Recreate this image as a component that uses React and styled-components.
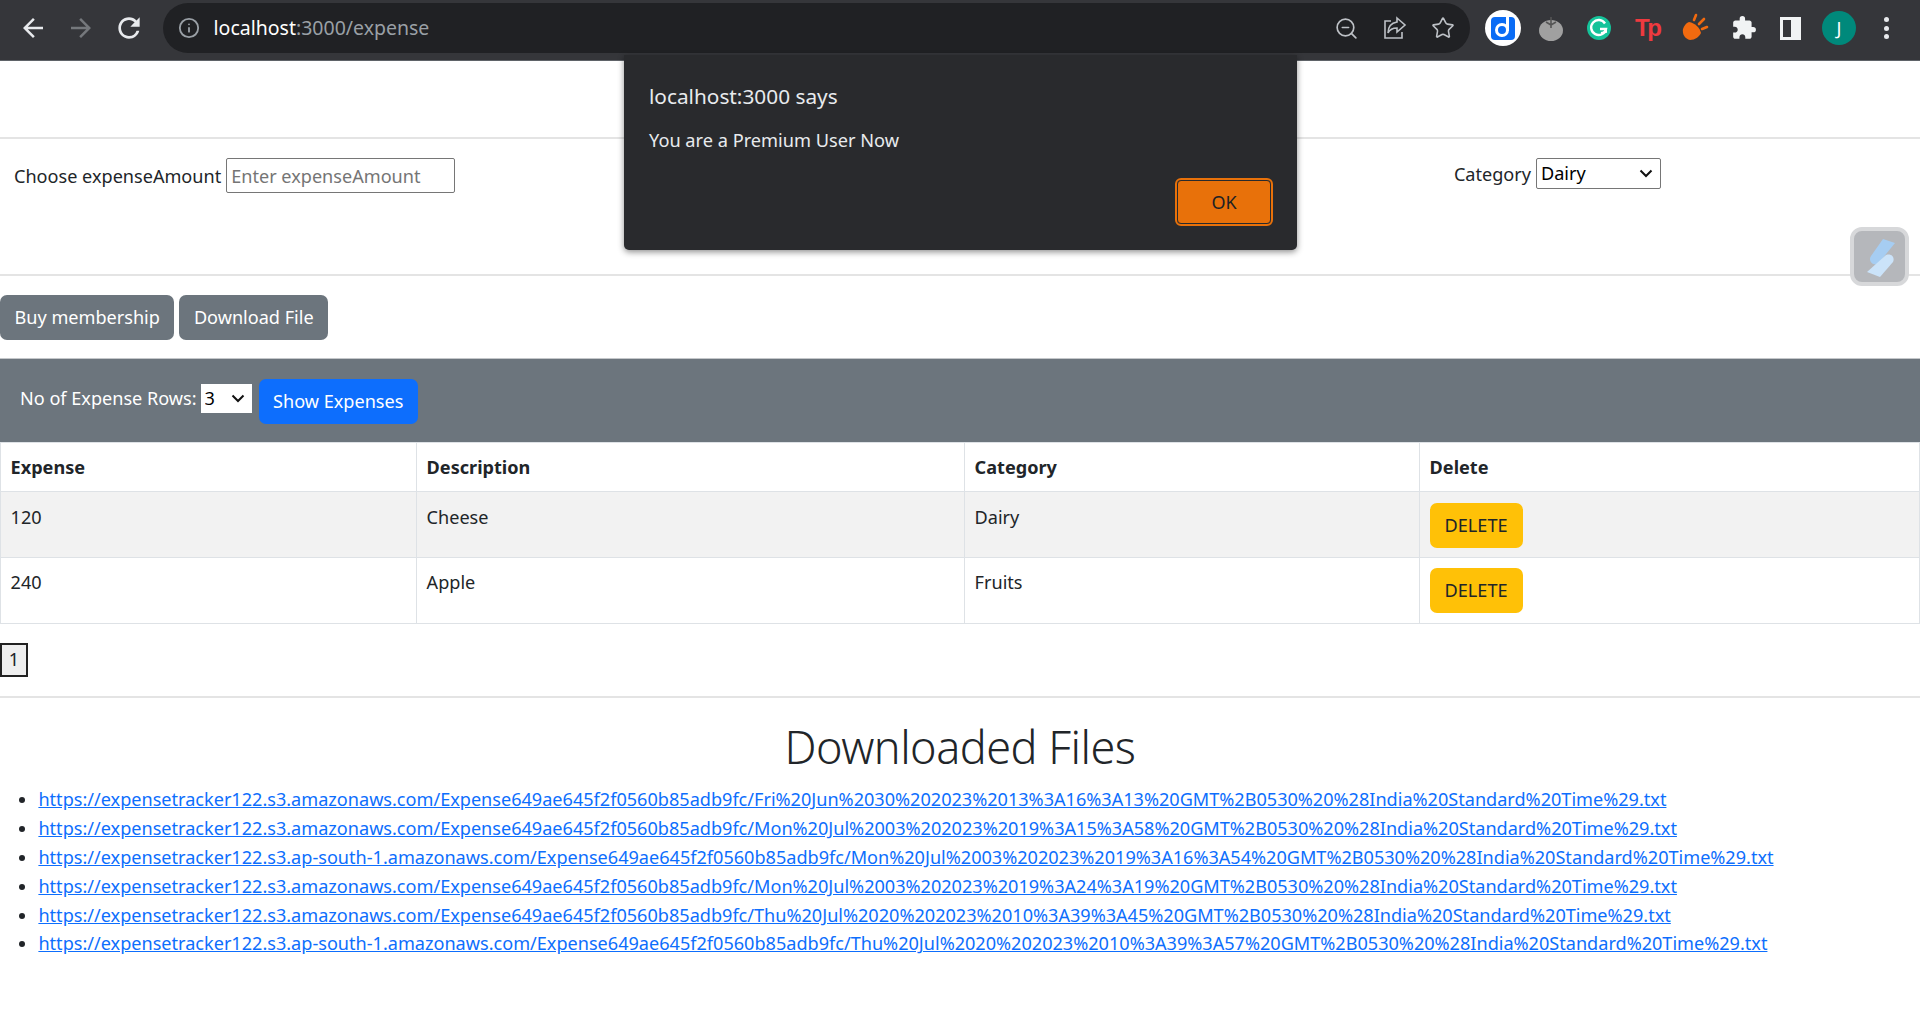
import React from "react";
import styled, { createGlobalStyle, css } from "styled-components";
import { MdArrowBack, MdArrowForward, MdRefresh, MdExtension } from "react-icons/md";
import { ZoomOut, Star, Info } from "lucide-react";

const links = [
  "https://expensetracker122.s3.amazonaws.com/Expense649ae645f2f0560b85adb9fc/Fri%20Jun%2030%202023%2013%3A16%3A13%20GMT%2B0530%20%28India%20Standard%20Time%29.txt",
  "https://expensetracker122.s3.amazonaws.com/Expense649ae645f2f0560b85adb9fc/Mon%20Jul%2003%202023%2019%3A15%3A58%20GMT%2B0530%20%28India%20Standard%20Time%29.txt",
  "https://expensetracker122.s3.ap-south-1.amazonaws.com/Expense649ae645f2f0560b85adb9fc/Mon%20Jul%2003%202023%2019%3A16%3A54%20GMT%2B0530%20%28India%20Standard%20Time%29.txt",
  "https://expensetracker122.s3.amazonaws.com/Expense649ae645f2f0560b85adb9fc/Mon%20Jul%2003%202023%2019%3A24%3A19%20GMT%2B0530%20%28India%20Standard%20Time%29.txt",
  "https://expensetracker122.s3.amazonaws.com/Expense649ae645f2f0560b85adb9fc/Thu%20Jul%2020%202023%2010%3A39%3A45%20GMT%2B0530%20%28India%20Standard%20Time%29.txt",
  "https://expensetracker122.s3.ap-south-1.amazonaws.com/Expense649ae645f2f0560b85adb9fc/Thu%20Jul%2020%202023%2010%3A39%3A57%20GMT%2B0530%20%28India%20Standard%20Time%29.txt",
];

const expenses = [
  { amount: 120, description: "Cheese", category: "Dairy" },
  { amount: 240, description: "Apple", category: "Fruits" },
];

const App = () => {
  return (
    <>
      <GlobalStyle />
      <Toolbar>
        <NavIcons>
          <ToolIcon><MdArrowBack size={30} /></ToolIcon>
          <ToolIcon $dim><MdArrowForward size={30} /></ToolIcon>
          <ToolIcon><MdRefresh size={32} /></ToolIcon>
        </NavIcons>
        <Omnibox>
          <Info size={22} color="#9aa0a6" />
          <Url>
            <b>localhost</b>:3000/expense
          </Url>
          <OmniIcons>
            <ZoomOut size={25} strokeWidth={1.6} />
            <svg width="26" height="26" viewBox="0 0 26 26" fill="none" stroke="currentColor" strokeWidth="1.6">
              <path d="M9 6H3v17h17v-6" />
              <path d="M15 3l8 7-8 7v-4c-4 0-7 1-9 5 0-6 3-10 9-11z" />
            </svg>
            <Star size={24} strokeWidth={1.6} />
          </OmniIcons>
        </Omnibox>
        <Extensions>
          <ToolIcon>
            <svg width="36" height="36" viewBox="0 0 36 36">
              <circle cx="18" cy="18" r="18" fill="#fff" />
              <rect x="6" y="7" width="24" height="23" rx="4" fill="#0a6cf5" />
              <circle cx="17" cy="20" r="5.5" fill="none" stroke="#fff" strokeWidth="3" />
              <path d="M22.5 7v14" stroke="#fff" strokeWidth="3" />
            </svg>
          </ToolIcon>
          <ToolIcon>
            <svg width="28" height="28" viewBox="0 0 28 28">
              <ellipse cx="14" cy="16.5" rx="12" ry="10.5" fill="#a0a0a0" />
              <path d="M14 3v11M9 8l5 3 5-3" stroke="#555" strokeWidth="1.6" fill="none" />
            </svg>
          </ToolIcon>
          <ToolIcon>
            <svg width="26" height="26" viewBox="0 0 26 26">
              <circle cx="13" cy="13" r="12" fill="#15c39a" />
              <path d="M19 8.5A7.5 7.5 0 1 0 20 14h-6" fill="none" stroke="#fff" strokeWidth="2.4" />
              <path d="M15 18l5-1v-4" fill="none" stroke="#fff" strokeWidth="2" />
            </svg>
          </ToolIcon>
          <ToolIcon>
            <TpLogo>Tp</TpLogo>
          </ToolIcon>
          <ToolIcon>
            <svg width="28" height="30" viewBox="0 0 28 30">
              <path d="M8 9c6 1 11 6 12 11-2 4-6 7-11 7-5-1-8-6-7-11 1-3 3-6 6-7z" fill="#f26a0f" />
              <path d="M13 7l2-5M18 11l5-5M21 16l5-2" stroke="#f26a0f" strokeWidth="2.6" strokeLinecap="round" />
            </svg>
          </ToolIcon>
          <ToolIcon><MdExtension size={26} color="#f1f3f4" /></ToolIcon>
          <ToolIcon>
            <SidePanel />
          </ToolIcon>
          <ToolIcon><Avatar>J</Avatar></ToolIcon>
          <ToolIcon>
            <Dots><i /><i /><i /></Dots>
          </ToolIcon>
        </Extensions>
      </Toolbar>

      <HeaderSpace />

      <FormRow>
        <Field>
          <FieldLabel>Choose expenseAmount</FieldLabel>
          <AmountInput placeholder="Enter expenseAmount" />
        </Field>
        <Field>
          <FieldLabel>Category</FieldLabel>
          <CategorySelect defaultValue="Dairy">
            <option>Dairy</option>
            <option>Fruits</option>
          </CategorySelect>
        </Field>
      </FormRow>

      <ButtonRow>
        <GreyButton>Buy membership</GreyButton>
        <GreyButton>Download File</GreyButton>
      </ButtonRow>

      <RowsBar>
        <RowsLabel>No of Expense Rows:</RowsLabel>
        <RowsSelect defaultValue="3">
          <option>3</option>
          <option>5</option>
          <option>10</option>
        </RowsSelect>
        <ShowButton>Show Expenses</ShowButton>
      </RowsBar>

      <ExpenseTable>
        <colgroup>
          <col width="416" />
          <col width="548" />
          <col width="455" />
          <col />
        </colgroup>
        <thead>
          <tr>
            <th>Expense</th>
            <th>Description</th>
            <th>Category</th>
            <th>Delete</th>
          </tr>
        </thead>
        <tbody>
          {expenses.map((e) => (
            <tr key={e.amount}>
              <td>{e.amount}</td>
              <td>{e.description}</td>
              <td>{e.category}</td>
              <td><DeleteButton>DELETE</DeleteButton></td>
            </tr>
          ))}
        </tbody>
      </ExpenseTable>

      <Pager>
        <PageButton>1</PageButton>
      </Pager>

      <Heading>Downloaded Files</Heading>
      <LinkList>
        {links.map((l) => (
          <li key={l}><a href="#top">{l}</a></li>
        ))}
      </LinkList>

      <Dialog>
        <DialogTitle>localhost:3000 says</DialogTitle>
        <DialogText>You are a Premium User Now</DialogText>
        <DialogActions>
          <OkButton>OK</OkButton>
        </DialogActions>
      </Dialog>

      <FloatWidget>
        <svg width="36" height="42" viewBox="0 0 36 42">
          <path d="M21 3l12 4-17 21c-6 2-10-4-7-8z" fill="#a6cdf2" />
          <path d="M24 19c6-2 9 3 7 7L18 41 5 36z" fill="#cbe3f9" />
        </svg>
      </FloatWidget>
    </>
  );
};

export default App;

const GlobalStyle = createGlobalStyle`
  body {
    margin: 0;
    background: #fff;
    color: #212529;
    font-family: "Noto Sans", "Open Sans", sans-serif;
    font-size: 18.1px;
    line-height: 28.8px;
  }
`;

const chevron = css`
  appearance: none;
  background: #fff url("data:image/svg+xml,%3Csvg xmlns='http://www.w3.org/2000/svg' width='14' height='9' viewBox='0 0 14 9'%3E%3Cpath d='M1.5 1.5L7 7l5.5-5.5' fill='none' stroke='%23111' stroke-width='2'/%3E%3C/svg%3E") no-repeat right 7px center;
`;

const Toolbar = styled.div`
  height: 57px;
  padding-top: 3px;
  display: flex;
  align-items: flex-start;
  background: #35363a;
  border-bottom: 1px solid #5f6368;
`;

const NavIcons = styled.div`
  display: flex;
  padding-left: 8.5px;
  margin-right: 9.5px;
`;

const ToolIcon = styled.div`
  width: 48.2px;
  height: 50px;
  display: flex;
  align-items: center;
  justify-content: center;
  color: ${(p) => (p.$dim ? "#75787c" : "#e8eaed")};
`;

const Omnibox = styled.div`
  width: 1307px;
  height: 50px;
  border-radius: 25px;
  background: #202124;
  display: flex;
  align-items: center;
  padding-left: 15px;
  box-sizing: border-box;
`;

const Url = styled.div`
  margin-left: 14px;
  color: #9aa0a6;
  font-size: 19.5px;
  b {
    font-weight: 400;
    color: #fff;
  }
`;

const OmniIcons = styled.div`
  margin-left: auto;
  margin-right: 15px;
  display: flex;
  align-items: center;
  gap: 23px;
  color: #bdc1c6;
`;

const Extensions = styled.div`
  display: flex;
  margin-left: 9px;
`;

const TpLogo = styled.span`
  font-family: "Liberation Sans", sans-serif;
  font-weight: 700;
  font-size: 24px;
  letter-spacing: -2.5px;
  color: #ef3a3f;
`;

const SidePanel = styled.div`
  width: 21px;
  height: 23px;
  margin-left: -2px;
  box-sizing: border-box;
  background: #f1f3f4;
  border: 3px solid #f1f3f4;
  border-right-width: 10px;
  box-shadow: inset 0 0 0 20px #35363a;
`;

const Avatar = styled.div`
  width: 34px;
  height: 34px;
  margin-left: -2px;
  border-radius: 50%;
  background: #00897b;
  color: #fff;
  font-size: 18px;
  line-height: 34px;
  text-align: center;
`;

const Dots = styled.div`
  display: flex;
  flex-direction: column;
  gap: 3.5px;
  margin-left: -4px;
  i {
    width: 5px;
    height: 5px;
    border-radius: 50%;
    background: #e8eaed;
  }
`;

const HeaderSpace = styled.div`
  height: 76px;
  border-bottom: 2px solid #e4e4e4;
`;

const FormRow = styled.div`
  height: 116px;
  border-bottom: 2px solid #e4e4e4;
  display: flex;
  justify-content: space-between;
  align-items: flex-start;
  padding: 19px 259px 0 14px;
`;

const Field = styled.div`
  display: flex;
  align-items: center;
  gap: 5px;
`;

const FieldLabel = styled.label`
  padding-top: 2px;
`;

const AmountInput = styled.input`
  width: 229px;
  height: 35px;
  box-sizing: border-box;
  border: 1.2px solid #767676;
  border-radius: 2px;
  padding: 1px 4px;
  font: inherit;
  &::placeholder {
    color: #757575;
  }
`;

const CategorySelect = styled.select`
  ${chevron};
  width: 125px;
  height: 31px;
  padding-left: 4px;
  border: 1.2px solid #767676;
  border-radius: 2px;
  font: inherit;
`;

const ButtonRow = styled.div`
  display: flex;
  gap: 5px;
  padding: 19px 0 18px;
`;

const Button = styled.button`
  height: 45px;
  border: none;
  border-radius: 7px;
  padding: 0 14.5px;
  font: inherit;
`;

const GreyButton = styled(Button)`
  background: #6c757d;
  color: #fff;
`;

const RowsBar = styled.div`
  height: 84px;
  box-sizing: border-box;
  padding-left: 20px;
  display: flex;
  align-items: center;
  background: #6c757d;
  border-top: 1px solid #c4c7ca;
`;

const RowsLabel = styled.span`
  color: #fff;
  margin: 0 4px 4px 0;
`;

const RowsSelect = styled.select`
  ${chevron};
  width: 51px;
  height: 29px;
  padding-left: 4px;
  border: none;
  font: inherit;
  margin-bottom: 5px;
`;

const ShowButton = styled(Button)`
  background: #0d6efd;
  color: #fff;
  margin-left: 7px;
  margin-top: 1px;
`;

const ExpenseTable = styled.table`
  width: 100%;
  table-layout: fixed;
  border-collapse: collapse;
  th,
  td {
    border: 1.2px solid #dee2e6;
    padding: 10.2px 9.6px 9.5px;
    text-align: left;
    vertical-align: top;
  }
  th {
    font-weight: 700;
  }
  tbody tr:nth-child(odd) {
    background: #f2f2f2;
  }
`;

const DeleteButton = styled(Button)`
  background: #ffc107;
  color: #212529;
  display: block;
  padding: 0 15px;
`;

const Pager = styled.div`
  padding: 19px 0;
  border-bottom: 2px solid #e4e4e4;
`;

const PageButton = styled.button`
  display: block;
  width: 28px;
  height: 34px;
  padding: 0;
  border: 2px solid #222;
  background: #efefef;
  color: #212529;
  font: inherit;
`;

const Heading = styled.h1`
  margin: 20.5px 0 9.5px;
  font-size: 45px;
  line-height: 57.6px;
  letter-spacing: -0.5px;
  font-weight: 300;
  text-align: center;
`;

const LinkList = styled.ul`
  margin: 0;
  padding-left: 38.4px;
  a {
    color: #0d6efd;
  }
`;

const Dialog = styled.div`
  position: absolute;
  top: 55px;
  left: 624px;
  width: 673px;
  height: 195px;
  box-sizing: border-box;
  padding: 26px 25px 0;
  background: #292a2d;
  border-radius: 0 0 5px 5px;
  box-shadow: 0 2px 6px rgba(0, 0, 0, 0.45);
  color: #e8eaed;
`;

const DialogTitle = styled.div`
  font-size: 20.8px;
  line-height: 30px;
`;

const DialogText = styled.div`
  margin-top: 15px;
  font-size: 18.2px;
  line-height: 28px;
`;

const DialogActions = styled.div`
  display: flex;
  justify-content: flex-end;
  margin-top: 26px;
`;

const OkButton = styled.button`
  width: 94px;
  height: 44px;
  margin-right: 1px;
  border: 1.5px solid #292a2d;
  border-radius: 4px;
  background: #e8710a;
  outline: 2px solid #e8710a;
  color: #202124;
  font: inherit;
  font-size: 18px;
`;

const FloatWidget = styled.div`
  position: absolute;
  top: 227px;
  left: 1850px;
  width: 59px;
  height: 59px;
  box-sizing: border-box;
  border: 4px solid #d7d8da;
  border-radius: 12px;
  background: #b5b7bb;
  display: flex;
  align-items: center;
  justify-content: center;
`;
